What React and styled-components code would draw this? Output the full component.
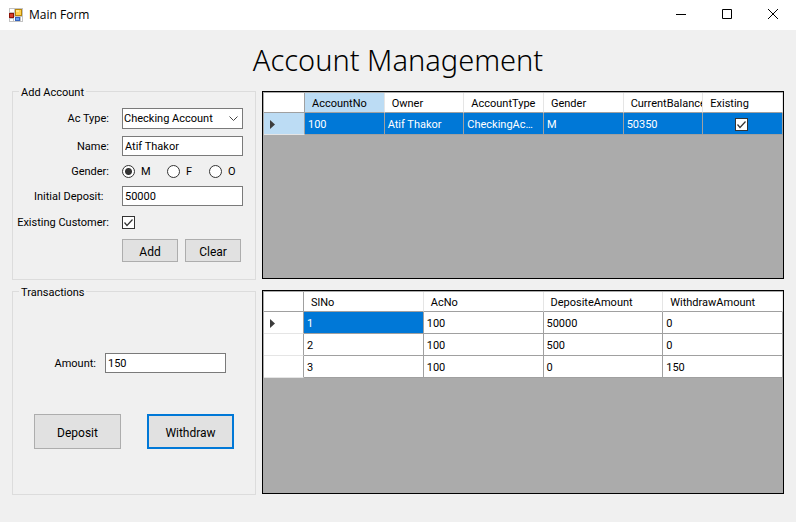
import React from 'react';
import styled, { createGlobalStyle, css } from 'styled-components';

const GlobalStyle = createGlobalStyle`
  *, *::before, *::after { box-sizing: border-box; }
  body {
    margin: 0;
    background: #f0f0f0;
    color: #000;
    font: 11px/15px Roboto, "Liberation Sans", sans-serif;
  }
  button, input, select { font: inherit; color: inherit; border-radius: 0; }
`;

const Window = styled.div`
  display: flex;
  flex-direction: column;
  min-height: 100vh;
`;

const TitleBar = styled.header`
  display: flex;
  align-items: center;
  height: 30px;
  padding-left: 9px;
  background: #fff;
  font: 12px/16px "Open Sans", "Noto Sans", sans-serif;
`;

const Caption = styled.span`
  flex: 1;
  padding-left: 6px;
`;

const CaptionButton = styled.button`
  display: grid;
  place-items: center;
  width: 46px;
  height: 30px;
  padding: 0 0 2px;
  border: 0;
  background: transparent;
`;

const Content = styled.main`
  display: flex;
  flex: 1;
  flex-direction: column;
  padding: 10px 12px 27px;
`;

const Heading = styled.h1`
  margin: 0;
  height: 44px;
  font: 300 29px/39px "Noto Sans", "Open Sans", sans-serif;
  text-align: center;
`;

const Columns = styled.div`
  display: flex;
  flex: 1;
  gap: 6px;
`;

const FormColumn = styled.div`
  display: flex;
  flex-direction: column;
  flex: 0 0 244px;
  gap: 4px;
`;

const GridColumn = styled.div`
  display: flex;
  flex-direction: column;
  flex: 1;
  min-width: 0;
  gap: 11px;
  padding: 7px 0 1px;
`;

const Group = styled.fieldset`
  flex: ${(p) => (p.$fill ? 1 : 0)} 0 auto;
  min-width: 0;
  margin: 0;
  padding: ${(p) => p.$pad};
  border: 1px solid #dcdcdc;
`;

const Legend = styled.legend`
  height: 15px;
  margin-left: 6px;
  padding: 0 2px;
  line-height: 17px;
`;

const Fields = styled.div`
  display: grid;
  grid-template-columns: 96px 1fr;
  grid-template-rows: 21px 20px 16px 20px 19px 23px;
  gap: 7px 13px;
  align-items: center;
`;

const Label = styled.label`
  text-align: right;
  white-space: pre;
`;

const Hint = styled.span`
  text-align: right;
`;

const TextBox = styled.input`
  width: 100%;
  height: 20px;
  padding: 0 2px;
  border: 1px solid #7a7a7a;
  background: #fff;
  outline: 0;
`;

const SelectWrap = styled.div`
  display: grid;
  align-items: center;
  height: 21px;
  border: 1px solid #7a7a7a;
  background: #fff;

  & > * { grid-area: 1 / 1; }
  & > svg { justify-self: end; margin-right: 4px; pointer-events: none; }
`;

const Select = styled.select`
  width: 100%;
  height: 19px;
  padding: 0 20px 0 1px;
  border: 0;
  outline: 0;
  appearance: none;
  background: transparent;
`;

const RadioRow = styled.div`
  display: grid;
  grid-template-columns: 45px 42px auto;
`;

const RadioLabel = styled.label`
  display: flex;
  align-items: center;
  gap: 6px;
`;

const Radio = styled.input`
  width: 13px;
  height: 13px;
  margin: 0;
  appearance: none;
  border: 1px solid #333;
  border-radius: 50%;
  background: #fff;

  &:checked { background: radial-gradient(circle, #333 0 3px, #fff 4px); }
`;

const Tick = styled.span`
  display: grid;
  width: 13px;
  height: 13px;
  margin: ${(p) => (p.$centered ? '0 auto' : '0')};

  & > * { grid-area: 1 / 1; }
  & > svg { pointer-events: none; visibility: hidden; }
  & > input:checked + svg { visibility: visible; }
`;

const TickInput = styled.input`
  width: 13px;
  height: 13px;
  margin: 0;
  appearance: none;
  border: 1px solid #333;
  background: #fff;
`;

const ButtonRow = styled.div`
  display: flex;
  grid-column: 2;
  gap: 7px;
`;

const PushButton = styled.button`
  width: ${(p) => (p.$large ? '87px' : '56px')};
  height: ${(p) => (p.$large ? '35px' : '23px')};
  padding: 2px 0 0;
  border: ${(p) => (p.$focused ? '2px solid #0078d7' : '1px solid #adadad')};
  background: #e1e1e1;
  font: 12px/16px Roboto, "Liberation Sans", sans-serif;
`;

const AmountRow = styled.div`
  display: grid;
  grid-template-columns: 83px 1fr;
  gap: 9px;
  align-items: center;
  padding-right: 29px;
`;

const ActionRow = styled.div`
  display: flex;
  justify-content: center;
  gap: 26px;
  margin-top: 41px;
`;

const GridPane = styled.div`
  flex: ${(p) => p.$grow} 0 auto;
  padding: 1px 0 0 1px;
  border: 1px solid #000;
  background: #ababab;
`;

const Table = styled.table`
  width: 100%;
  table-layout: fixed;
  border-spacing: 0;
  text-align: left;
`;

const cellBase = css`
  overflow: hidden;
  white-space: nowrap;
  font-weight: 400;
`;

const HeadCell = styled.th`
  ${cellBase}
  height: 20px;
  padding: 1px 0 0 7px;
  border-right: 1px solid #e5e5e5;
  border-bottom: 1px solid #a0a0a0;
  background: ${(p) => (p.$active ? '#bcdcf4' : '#fff')};
`;

const CornerCell = styled.td`
  width: ${(p) => (p.$wide ? '41px' : '40px')};
  padding: 0;
  border-right: 1px solid #a0a0a0;
  border-bottom: 1px solid #a0a0a0;
  background: #fff;
`;

const RowHead = styled.th`
  padding: 1px 0 0 6px;
  border-right: 1px solid #a0a0a0;
  border-bottom: 1px solid #e5e5e5;
  background: ${(p) => (p.$active ? '#bcdcf4' : '#fff')};

  & > svg { display: block; }
`;

const Cell = styled.td`
  ${cellBase}
  height: 22px;
  padding: 2px 6px 0 3px;
  border-right: 1px solid #a0a0a0;
  border-bottom: 1px solid #a0a0a0;
  background: ${(p) => (p.$selected ? '#0078d7' : '#fff')};
  color: ${(p) => (p.$selected ? '#fff' : '#000')};
  text-overflow: ellipsis;
  line-height: 19px;
`;

const AppIcon = () => (
  <svg width="14" height="14" viewBox="0 0 14 14" shapeRendering="crispEdges" aria-hidden="true">
    <rect width="14" height="14" fill="#c3c3c3" />
    <path d="M1 1h4v3H1zM1 11h3v2H1zM12 9h1v4h-1zM5 9h1v4H5z" fill="#fff" />
    <rect y="5" width="5" height="5" fill="#8c1208" />
    <rect x="1" y="6" width="3" height="3" fill="#d8402c" />
    <rect x="6" y="1" width="7" height="7" fill="#b8860b" />
    <rect x="7" y="2" width="5" height="5" fill="#ffd24d" />
    <rect x="7" y="2" width="3" height="2" fill="#ffe68c" />
    <rect x="6" y="9" width="5" height="4" fill="#3563bd" />
    <rect x="7" y="10" width="3" height="2" fill="#6aa0f0" />
  </svg>
);

const captionShapes = {
  Minimize: 'M0 5.5h10',
  Maximize: 'M.5 .5h9v9h-9z',
  Close: 'M0 0l10 10M10 0L0 10',
};

const CheckBox = ({ id, label, centered }) => (
  <Tick $centered={centered}>
    <TickInput type="checkbox" id={id} aria-label={label} defaultChecked />
    <svg width="13" height="13" viewBox="0 0 13 13" aria-hidden="true">
      <path d="M2.5 6.5l2.5 3 5.5-6" fill="none" stroke="#333" strokeWidth="1.2" />
    </svg>
  </Tick>
);

const RowArrow = () => (
  <svg width="5" height="9" viewBox="0 0 5 9" aria-label="Current row">
    <path d="M0 0l5 4.5L0 9z" fill="#3c3c3c" />
  </svg>
);

const accounts = {
  columns: ['AccountNo', 'Owner', 'AccountType', 'Gender', 'CurrentBalance', 'Existing'],
  rows: [['100', 'Atif Thakor', 'CheckingAccount', 'M', '50350', true]],
};

const transactions = {
  columns: ['SlNo', 'AcNo', 'DepositeAmount', 'WithdrawAmount'],
  rows: [
    ['1', '100', '50000', '0'],
    ['2', '100', '500', '0'],
    ['3', '100', '0', '150'],
  ],
};

const DataGrid = ({ data, grow, fullRow }) => (
  <GridPane $grow={grow}>
    <Table>
      <thead>
        <tr>
          <CornerCell $wide={fullRow} />
          {data.columns.map((name, i) => (
            <HeadCell key={name} scope="col" $active={fullRow && i === 0}>{name}</HeadCell>
          ))}
        </tr>
      </thead>
      <tbody>
        {data.rows.map((row, r) => (
          <tr key={row[0]}>
            <RowHead scope="row" $active={fullRow && r === 0}>{r === 0 && <RowArrow />}</RowHead>
            {row.map((value, c) => (
              <Cell key={data.columns[c]} $selected={r === 0 && (fullRow || c === 0)}>
                {value === true ? <CheckBox label={data.columns[c]} centered /> : value}
              </Cell>
            ))}
          </tr>
        ))}
      </tbody>
    </Table>
  </GridPane>
);

export default function App() {
  return (
    <Window>
      <GlobalStyle />
      <TitleBar>
        <AppIcon />
        <Caption>Main Form</Caption>
        {Object.entries(captionShapes).map(([name, d]) => (
          <CaptionButton key={name} type="button" aria-label={name}>
            <svg width="10" height="10" viewBox="0 0 10 10" overflow="visible">
              <path d={d} fill="none" stroke="#000" />
            </svg>
          </CaptionButton>
        ))}
      </TitleBar>
      <Content>
        <Heading>Account Management</Heading>
        <Columns>
          <FormColumn>
            <Group $pad="9px 12px 17px 0">
              <Legend>Add Account</Legend>
              <Fields>
                <Label htmlFor="type">Ac Type:</Label>
                <SelectWrap>
                  <Select id="type" defaultValue="Checking Account">
                    <option>Checking Account</option>
                    <option>Saving Account</option>
                  </Select>
                  <svg width="9" height="6" viewBox="0 0 9 6" aria-hidden="true">
                    <path d="M.5 .5l4 4 4-4" fill="none" stroke="#444" />
                  </svg>
                </SelectWrap>
                <Label htmlFor="name">Name:</Label>
                <TextBox id="name" defaultValue="Atif Thakor" />
                <Hint id="gender">Gender:</Hint>
                <RadioRow role="radiogroup" aria-labelledby="gender">
                  {['M', 'F', 'O'].map((g) => (
                    <RadioLabel key={g}>
                      <Radio type="radio" name="gender" value={g} defaultChecked={g === 'M'} />
                      {g}
                    </RadioLabel>
                  ))}
                </RadioRow>
                <Label htmlFor="deposit">{'Initial Deposit:  '}</Label>
                <TextBox id="deposit" defaultValue="50000" />
                <Label htmlFor="existing">Existing Customer:</Label>
                <CheckBox id="existing" />
                <ButtonRow>
                  <PushButton type="button">Add</PushButton>
                  <PushButton type="button">Clear</PushButton>
                </ButtonRow>
              </Fields>
            </Group>
            <Group $fill $pad="54px 0 43px">
              <Legend>Transactions</Legend>
              <AmountRow>
                <Label htmlFor="amount">Amount:</Label>
                <TextBox id="amount" defaultValue="150" />
              </AmountRow>
              <ActionRow>
                <PushButton type="button" $large>Deposit</PushButton>
                <PushButton type="button" $large $focused>Withdraw</PushButton>
              </ActionRow>
            </Group>
          </FormColumn>
          <GridColumn>
            <DataGrid data={accounts} grow={143} fullRow />
            <DataGrid data={transactions} grow={115} />
          </GridColumn>
        </Columns>
      </Content>
    </Window>
  );
}
